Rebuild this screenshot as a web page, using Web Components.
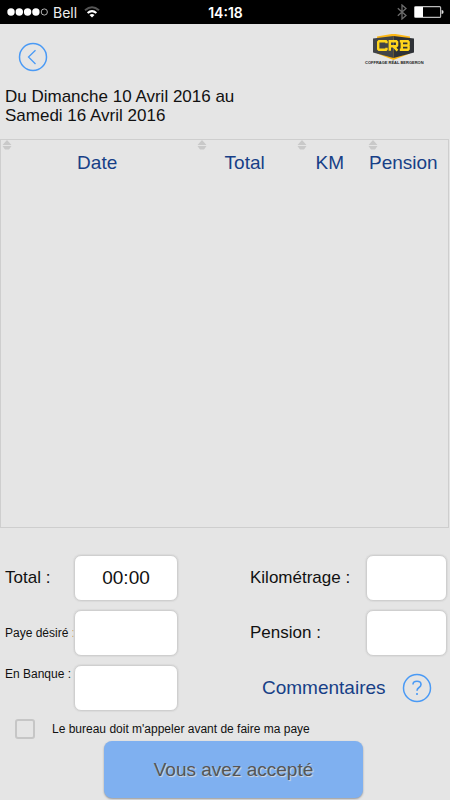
<!DOCTYPE html>
<html lang="fr">
<head>
<meta charset="utf-8">
<meta name="viewport" content="width=device-width, initial-scale=1">
<title>Feuille de temps</title>
<style>
  html { height: 100%; }
  body {
    margin: 0;
    min-height: 100%;
    background: #e5e5e5;
    color: #111;
    font-family: "Liberation Sans", Arial, sans-serif;
    font-size: 17px;
    --navy: #173f87;
    --sky: #4a9af5;
    --line: #cecece;
  }
</style>
</head>
<body>
<pay-app></pay-app>

<template id="t-status">
  <style>
    :host { display: grid; grid-template-columns: 1fr auto 1fr; align-items: center; height: 24px; padding: 0 6px 0 7px; background: #000; color: #fff; font: 14px Inter, Roboto, sans-serif; }
    .side { display: flex; align-items: center; }
    .name { margin: 0 7px 0 5px; color: #eee; }
    .end { justify-content: flex-end; gap: 7px; }
    .time { font-weight: 600; }
    svg { display: block; }
  </style>
  <div class="side">
    <svg width="41" height="8" viewBox="0 0 41 8" aria-hidden="true">
      <g fill="#fff"><circle cx="4" cy="4" r="3.7"/><circle cx="12.3" cy="4" r="3.7"/><circle cx="20.6" cy="4" r="3.7"/><circle cx="28.9" cy="4" r="3.7"/></g>
      <circle cx="37.3" cy="4" r="3.1" fill="none" stroke="#ddd" stroke-width=".8"/>
    </svg>
    <span class="name"><slot name="carrier"></slot></span>
    <svg width="16" height="12" viewBox="0 0 16 12" fill="none" aria-hidden="true">
      <path d="M1 4.2Q8-1.8 15 4.2" stroke="#555" stroke-width="2"/>
      <path d="M3.6 7Q8 3.2 12.4 7" stroke="#fff" stroke-width="2"/>
      <path d="M5.5 9Q8 7 10.5 9L8 11.6z" fill="#fff"/>
    </svg>
  </div>
  <span class="time"><slot name="time"></slot></span>
  <div class="side end">
    <svg width="10" height="16" viewBox="0 0 10 16" fill="none" stroke="#6c6c6c" stroke-width="1.3" aria-hidden="true"><path d="M.8 4.2L9 11.6 5 15V1l4 3.4L.8 11.8"/></svg>
    <svg width="30" height="12" viewBox="0 0 30 12" aria-hidden="true">
      <rect x=".6" y=".6" width="26" height="10.8" rx="1" fill="none" stroke="#bbb" stroke-width="1.2"/>
      <rect x="1" y="1" width="8" height="10" fill="#fff"/><path d="M27.6 4q2 0 2 2t-2 2z" fill="#ddd"/>
    </svg>
  </div>
</template>

<template id="t-header">
  <style>
    :host { display: block; padding: 10px 26px 0 18px; }
    header { display: flex; justify-content: space-between; align-items: flex-start; }
    button { display: block; margin: 8px 0 0; padding: 0; border: 0; background: none; color: var(--sky); }
    svg { display: block; }
    .logo { font-family: "Liberation Sans", Arial, sans-serif; font-weight: 700; }
  </style>
  <header>
    <button type="button" aria-label="Retour">
      <svg width="30" height="30" viewBox="0 0 30 30" fill="none" stroke="currentColor" stroke-width="1.5"><circle cx="15" cy="15" r="13.5"/><path d="M17.5 8.3L10.5 15l7 7" stroke-width="1.3"/></svg>
    </button>
    <svg class="logo" width="60" height="32" viewBox="0 0 60 32" role="img" aria-label="CRB Coffrage Réal Bergeron">
      <path d="M13 2.4L27.5 0h4L46 2.4v3H13zM13 19.5l16.5 6.5L46 19.5v-3H13z" fill="#fdb714"/>
      <path d="M9 4.4L29.5 2v22L9 18.6z" fill="#414448"/>
      <path d="M50 4.4L29.5 2v22L50 18.6z" fill="#2f3237"/>
      <g fill="none" stroke="#ffd51c" stroke-width="2.4">
        <path d="M22.5 9.2V7.7l-.5-.5h-7l-.8.8v7l.8.8h7l.5-.5v-1.5"/>
        <path d="M25.8 16.8V7.2h6.5l.8.8v3.4l-.8.8h-6.5M29.5 12.4l4 4.2"/>
        <path d="M35.8 7.2h8l.8.8v2.6l-1 .9 1 .9v2.6l-.8.8h-8M37.8 7.5v8M37.8 11.5h6"/>
      </g>
      <text x="1" y="30" font-size="4" fill="#222">COFFRAGE RÉAL BERGERON</text>
    </svg>
  </header>
</template>

<template id="t-table">
  <style>
    :host { display: block; box-sizing: border-box; height: 389px; margin-right: 1px; border: 1px solid var(--line); }
    table { width: 100%; border-collapse: collapse; table-layout: fixed; }
    th { position: relative; box-sizing: border-box; padding: 12px 3px 12px 0; font-weight: 400; font-size: 19px; line-height: 22px; color: var(--navy); }
    th:last-child { padding-right: 8px; }
    .date { width: 43.7%; } .total { width: 22.3%; } .km { width: 15.8%; }
    svg { position: absolute; left: 1px; top: 0; }
  </style>
  <table>
    <thead><tr><th class="date" scope="col">Date</th><th class="total" scope="col">Total</th><th class="km" scope="col">KM</th><th scope="col">Pension</th></tr></thead>
    <tbody></tbody>
  </table>
</template>

<template id="t-field">
  <style>
    :host { display: contents; }
    label { align-self: center; white-space: nowrap; font-size: 17px; }
    :host([small]) label { font-size: 12px; }
    :host([top]) label { align-self: start; margin-top: 2px; }
    :host([second]) label { grid-column: 4; }
    input { box-sizing: border-box; width: 100%; min-width: 0; height: 46px; margin: 0; padding: 0 4px; border: 1px solid #cfcfcf; border-radius: 7px; box-shadow: 0 0 1px 1px #dadada; background: #fff; color: #111; font: inherit; font-size: 19px; text-align: center; }
  </style>
  <label for="v"><slot></slot></label><input id="v" type="text">
</template>

<template id="t-app">
  <style>
    :host { display: block; }
    h1 { margin: 15px 5px 14px; font-size: 17px; font-weight: 400; line-height: 19px; max-width: 240px; }
    form { display: block; }
    .grid { display: grid; grid-template-columns: 69px 104fr 72fr 116fr 81fr; row-gap: 9px; padding: 27px 3px 0 5px; }
    .comment { grid-column: 4 / 6; display: flex; align-items: center; gap: 16px; padding-left: 12px; color: var(--navy); font-size: 19px; text-decoration: none; }
    .comment svg { display: block; color: var(--sky); }
    .check { display: flex; align-items: center; gap: 17px; padding: 8px 15px 2px; font-size: 12px; }
    .check input { appearance: none; box-sizing: border-box; width: 20px; height: 20px; margin: 0; border: 2px solid #c6c6c6; border-radius: 3px; }
    .send { display: block; width: 60%; height: 57px; margin: 0 auto; border: 0; border-radius: 8px; background: #7fb0f0; box-shadow: 0 1px 2px #999; color: #555; font: inherit; font-size: 19px; text-shadow: 1px 1px 1px #ddd; }
    .actions { padding: 0 0 2px 17px; }
  </style>
  <status-bar><span slot="carrier">Bell</span><span slot="time">14:18</span></status-bar>
  <page-header></page-header>
  <main>
    <h1>Du Dimanche 10 Avril 2016 au Samedi 16 Avril 2016</h1>
    <hours-table></hours-table>
    <form>
      <div class="grid">
        <pay-field value="00:00">Total :</pay-field>
        <pay-field second>Kilométrage :</pay-field>
        <pay-field small>Paye désiré :</pay-field>
        <pay-field second>Pension :</pay-field>
        <pay-field small top>En Banque :</pay-field>
        <a class="comment" href="#commentaires">Commentaires
          <svg width="30" height="30" viewBox="0 0 30 30" fill="none" stroke="currentColor" stroke-width="1.5" aria-hidden="true"><circle cx="15" cy="15" r="13.5"/><path d="M11 11.5Q11 8.3 15 8.3t4 3.2q0 1.6-2 3-2 1.3-2 3.3M15 20v2" stroke-width="1.6"/></svg>
        </a>
      </div>
      <div class="check"><input type="checkbox" id="call"><label for="call">Le bureau doit m'appeler avant de faire ma paye</label></div>
      <div class="actions"><button class="send" type="button">Vous avez accepté</button></div>
    </form>
  </main>
</template>

<script>
  class TemplateElement extends HTMLElement {
    constructor() {
      super();
      const source = document.getElementById(this.constructor.template);
      this.attachShadow({ mode: "open" }).append(source.content.cloneNode(true));
    }
  }
  customElements.define("status-bar", class extends TemplateElement { static template = "t-status"; });
  customElements.define("page-header", class extends TemplateElement { static template = "t-header"; });
  customElements.define("hours-table", class extends TemplateElement {
    static template = "t-table";
    constructor() {
      super();
      const arrows = '<svg width="10" height="11" viewBox="0 0 10 11" fill="#c9c9c9" aria-hidden="true"><path d="M5 0l4.5 5h-9zM.5 6h9L7 9.5H3z"/></svg>';
      this.shadowRoot.querySelectorAll("th").forEach(th => th.insertAdjacentHTML("beforeend", arrows));
    }
  });
  customElements.define("pay-field", class extends TemplateElement {
    static template = "t-field";
    connectedCallback() {
      this.shadowRoot.querySelector("input").value = this.getAttribute("value") || "";
    }
  });
  customElements.define("pay-app", class extends TemplateElement { static template = "t-app"; });
</script>
</body>
</html>
